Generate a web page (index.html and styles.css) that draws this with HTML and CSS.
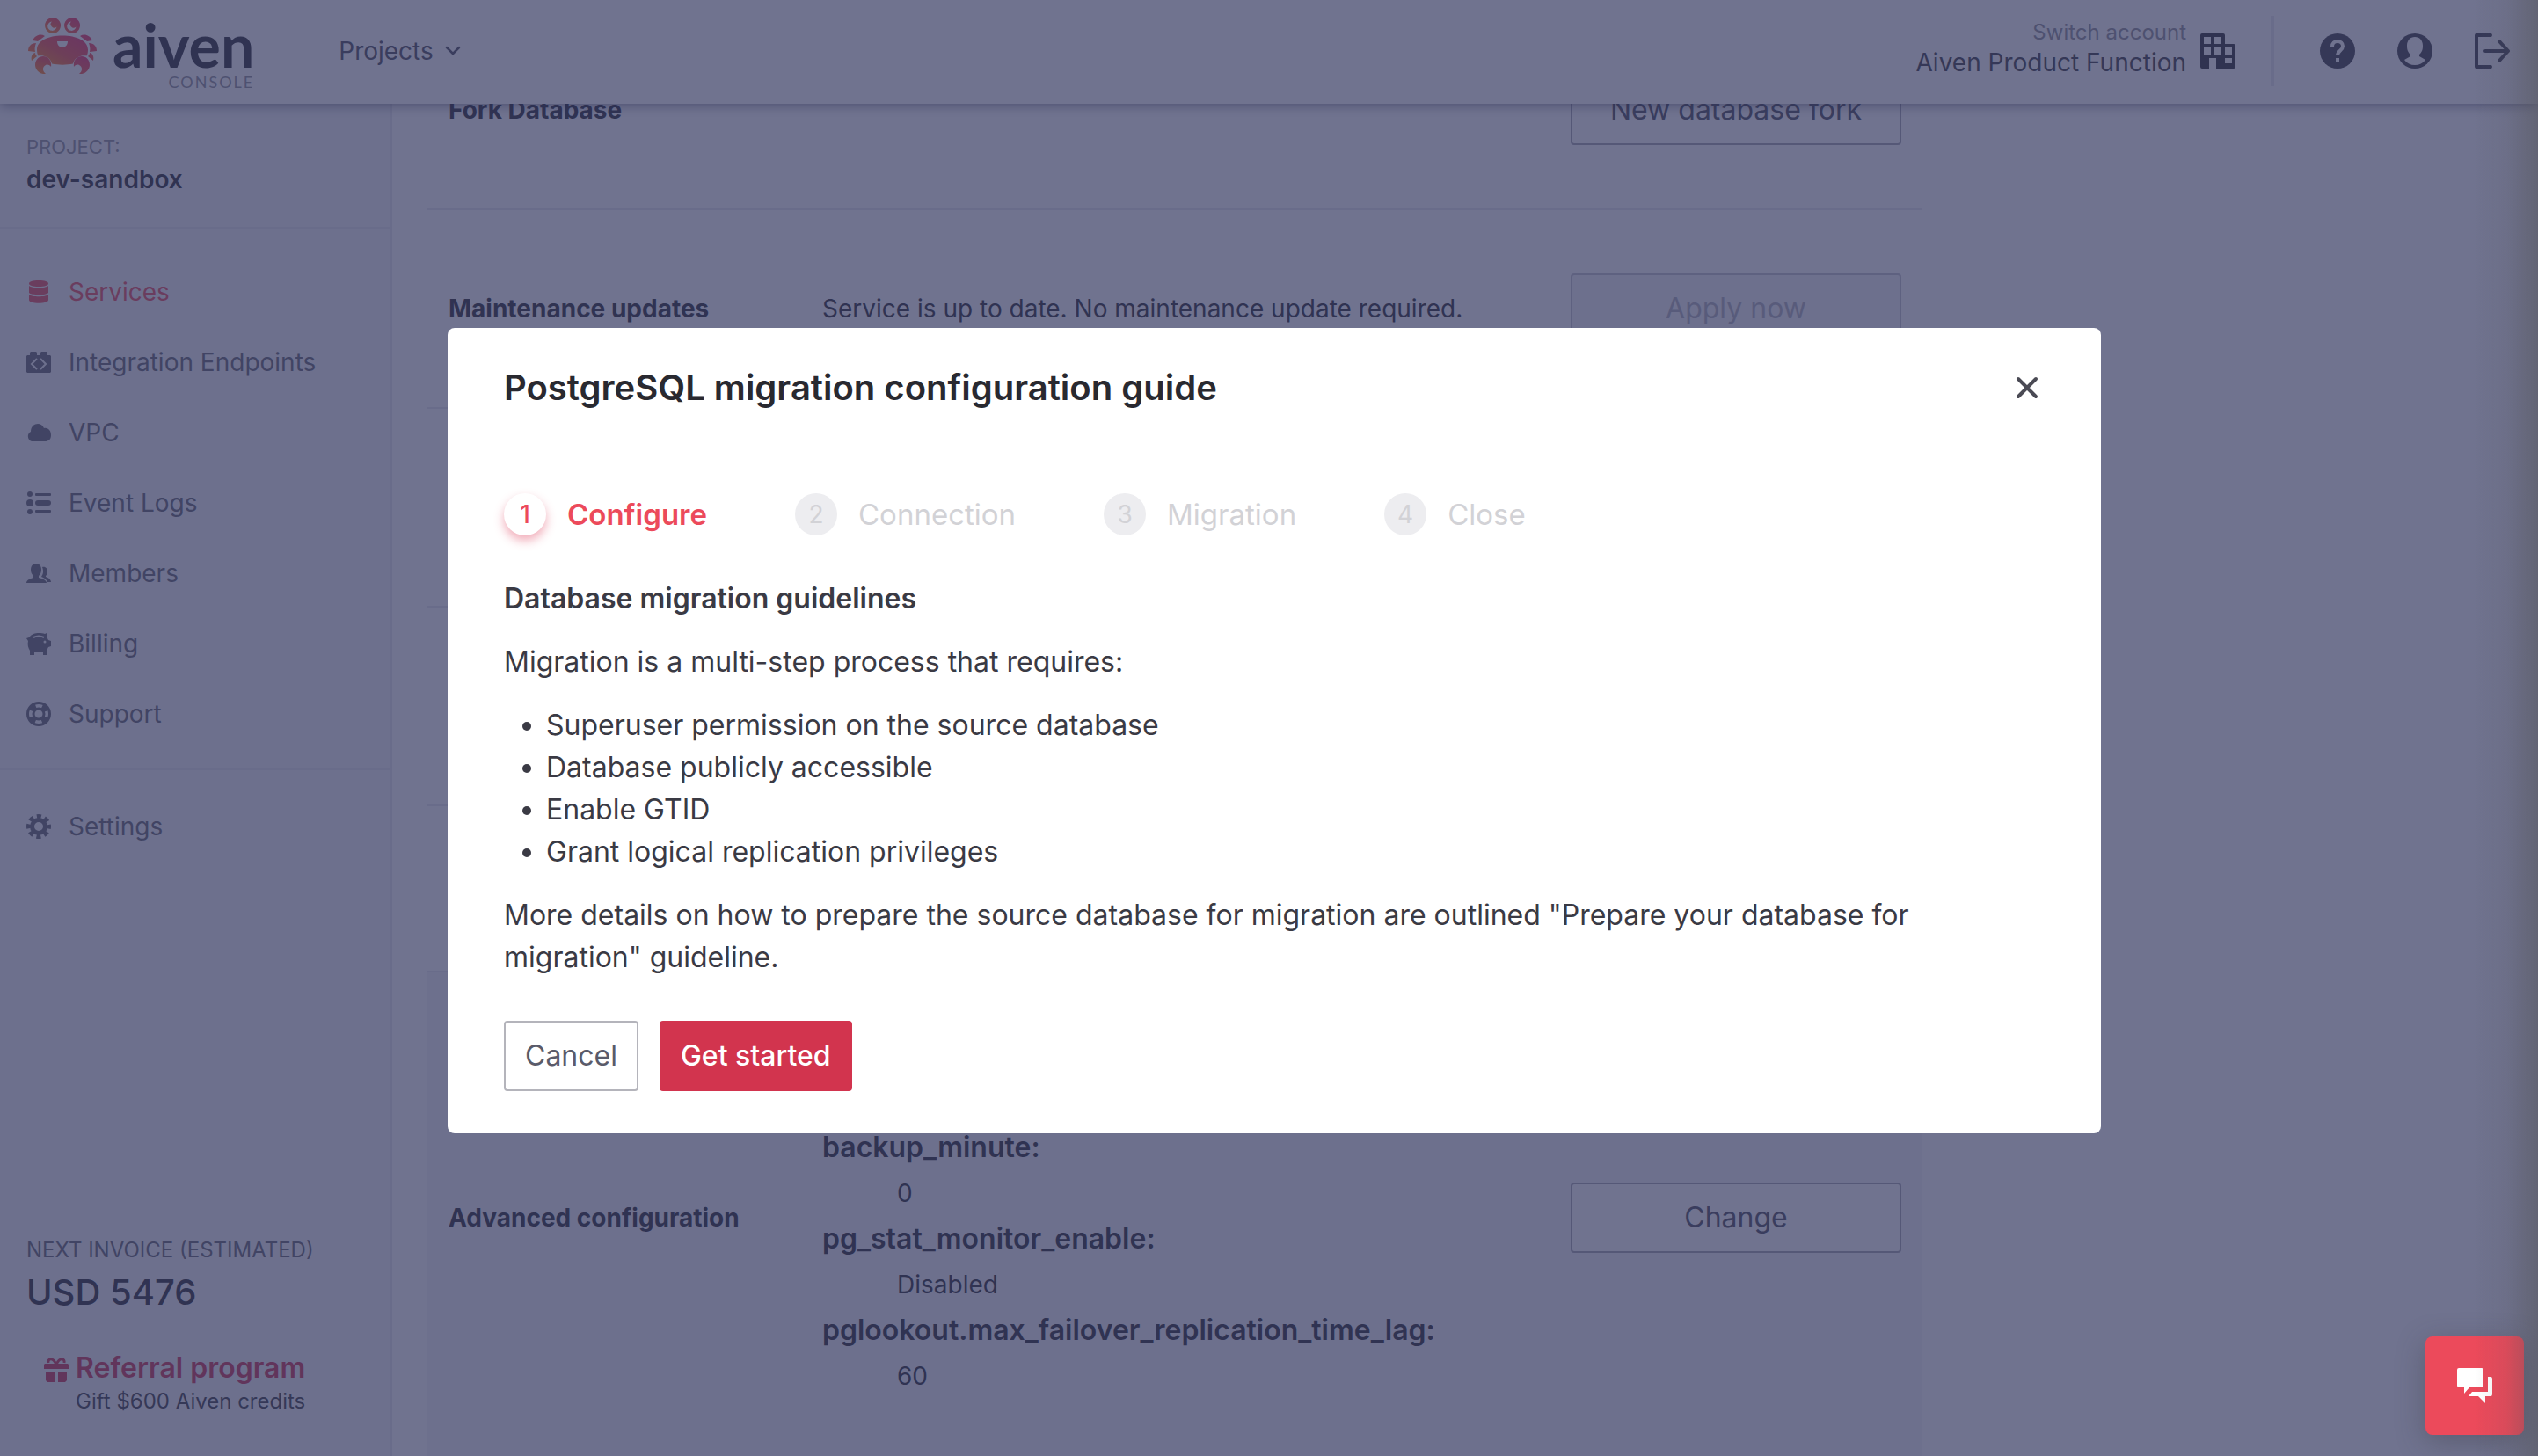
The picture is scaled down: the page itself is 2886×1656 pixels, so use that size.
FILE: index.html
```html
<!DOCTYPE html>
<html lang="en">
<head>
<meta charset="utf-8">
<title>Aiven Console</title>
<link rel="stylesheet" href="styles.css">
</head>
<body>
<div class="app">
  <header class="topbar">
    <a class="logo" href="#" aria-label="Aiven console">
      <svg class="crab" viewBox="0 0 78 64" aria-hidden="true">
        <defs>
          <linearGradient id="crab-fill" x1="0" y1="1" x2="1" y2="0">
            <stop offset="0" stop-color="#ff8b1f"/>
            <stop offset="0.45" stop-color="#f5504a"/>
            <stop offset="1" stop-color="#ec2f6c"/>
          </linearGradient>
        </defs>
        <g fill="url(#crab-fill)">
          <path fill-rule="evenodd" d="M28 0a9 9 0 1 0 .1 0zM27 4.500a5.200 5.200 0 1 0 5.500 6a4 4 0 0 1-5.500-6zM50 0a9 9 0 1 0 .1 0zM49 4.500a5.200 5.200 0 1 0 5.500 6a4 4 0 0 1-5.500-6z"/>
          <path fill-rule="evenodd" d="M39 20.500c16 0 29 6 29 16 0 3-.5 5-1.500 7-5-1-14 1-15.500 9-7 1.500-17 1.500-24 0-1.500-8-10.500-10-15.500-9-1-2-1.500-4-1.500-7 0-10 13-16 29-16zM33 27c0 4 2.500 7 6 7s6-3 6-7z"/>
          <path d="M5 26c3-6 9-8 14-5l-8 6zM73 26c-3-6-9-8-14-5l8 6zM0 38c0-5 3-9 9-9-1 3-2 6-1 10zM78 38c0-5-3-9-9-9 1 3 2 6 1 10zM4 49c-1-4 0-8 4-9 0 2 1 3 2 4zM74 49c1-4 0-8-4-9 0 2-1 3-2 4z"/>
          <path d="M20 64c-7 1-12-5-12-10 0-6 4-10 9-10 6 0 10 5 9 12-1-2-4-3-6-2-3 1-5 6 0 10zM58 64c7 1 12-5 12-10 0-6-4-10-9-10-6 0-10 5-9 12 1-2 4-3 6-2 3 1 5 6 0 10z"/>
        </g>
      </svg>
      <span class="wordmark">
        <span class="wordmark-name">aiven</span>
        <span class="wordmark-sub">CONSOLE</span>
      </span>
    </a>
    <button class="projects" type="button">Projects
      <svg class="chevron" viewBox="0 0 20 20" aria-hidden="true"><path d="M3 6l7 7 7-7" fill="none" stroke="currentColor" stroke-width="2.500" stroke-linecap="round" stroke-linejoin="round"/></svg>
    </button>
    <div class="account">
      <button class="switch" type="button">
        <span class="switch-text">
          <span class="switch-hint">Switch account</span>
          <span class="switch-name">Aiven Product Function</span>
        </span>
        <svg class="icon-lg dark" viewBox="0 0 40 40" aria-hidden="true"><path fill-rule="evenodd" fill="currentColor" d="M2 0h24a2 2 0 0 1 2 2v10h10a2 2 0 0 1 2 2v24a2 2 0 0 1-2 2H18V28h-8v12H2a2 2 0 0 1-2-2V2a2 2 0 0 1 2-2zM4 4v8h8V4zM16 4v8h8V4zM4 16v8h8v-8zM16 16v8h8v-8zM28 16v8h8v-8zM28 28v6h8v-6z"/></svg>
      </button>
      <button class="icon-button" type="button" aria-label="Help">
        <svg class="icon-lg" viewBox="0 0 40 40" aria-hidden="true"><circle cx="20" cy="20" r="20" fill="currentColor"/><path d="M14 15c0-4 2.500-6 6-6s6 2 6 5.500c0 5-6 5-6 10.500" fill="none" stroke="#fff" stroke-width="4"/><rect x="18" y="28" width="4" height="4" fill="#fff"/></svg>
      </button>
      <button class="icon-button" type="button" aria-label="User profile">
        <svg class="icon-lg" viewBox="0 0 40 40" aria-hidden="true"><circle cx="20" cy="20" r="20" fill="currentColor"/><path fill="#fff" d="M20 4c5.500 0 9 4 9 10 0 5-1 7-4 10v2l7 4c-3 4-7 6-12 6s-9-2-12-6l7-4v-2c-3-3-4-5-4-10 0-6 3.500-10 9-10z"/></svg>
      </button>
      <button class="icon-button" type="button" aria-label="Log out">
        <svg class="icon-lg" viewBox="0 0 40 40" aria-hidden="true"><path d="M18 2H2v36h16M12 20h26M28 9l10 11-10 11" fill="none" stroke="currentColor" stroke-width="4" stroke-linecap="round" stroke-linejoin="round"/></svg>
      </button>
    </div>
  </header>

  <div class="body">
    <aside class="sidebar">
      <div class="project">
        <div class="project-label">PROJECT:</div>
        <div class="project-name">dev-sandbox</div>
      </div>
      <nav class="menu">
        <a class="menu-item active" href="#"><svg class="icon" viewBox="0 0 28 28" aria-hidden="true"><path fill="currentColor" d="M14 1c7 0 11 1.500 11 3.500S21 8 14 8 3 6.500 3 4.500 7 1 14 1zM3 7c3 3 19 3 22 0v8c-2 3-20 3-22 0zM3 17c3 3 19 3 22 0v6c0 5-22 5-22 0z"/></svg>Services</a>
        <a class="menu-item" href="#"><svg class="icon" viewBox="0 0 28 28" aria-hidden="true"><path fill="currentColor" d="M1 6h3V3l1-1h6l1 1v3h4V3l1-1h6l1 1v3h3l1 1v18l-1 1H1l-1-1V7z"/><path d="M12 10l-6 6 6 6M16 10l6 6-6 6" fill="none" stroke="#f4f5f8" stroke-width="2"/></svg>Integration Endpoints</a>
        <a class="menu-item" href="#"><svg class="icon" viewBox="0 0 28 28" aria-hidden="true"><path fill="currentColor" d="M6 24a6 6 0 0 1-1-11c0-10 12-12 15-4 5-1 8 3 8 8s-3 7-7 7z"/></svg>VPC</a>
        <a class="menu-item" href="#"><svg class="icon" viewBox="0 0 28 28" aria-hidden="true"><g fill="currentColor"><circle cx="4" cy="4" r="3"/><circle cx="4" cy="14" r="4"/><circle cx="4" cy="24" r="3"/><rect x="10" y="3" width="18" height="3" rx="1"/><rect x="10" y="11" width="18" height="6" rx="3"/><rect x="10" y="22" width="18" height="3" rx="1"/></g></svg>Event Logs</a>
        <a class="menu-item" href="#"><svg class="icon" viewBox="0 0 28 28" aria-hidden="true"><g fill="currentColor"><path d="M11 3c4 0 6 3 6 7 0 3-1 5-3 7v2c4 1 9 3 9 6H0c0-3 4-5 8-6v-2c-2-2-3-4-3-7 0-4 2-7 6-7z"/><path d="M18 7c4-1 6 2 6 5s-1 4-2 5v1c3 1 6 3 6 6h-4c-1-3-4-5-7-6 2-3 3-6 1-11z"/></g></svg>Members</a>
        <a class="menu-item" href="#"><svg class="icon" viewBox="0 0 28 28" aria-hidden="true"><path fill="currentColor" d="M0 8l3-1C6 3 10 2 14 2c3 0 5 0 7 1l2-1v4l2 4 3 1v6l-3 1-2 4v5h-4v-3H9v3H4v-5c-2-3-3-7-2-11z"/><path d="M8 7c4-2 8-2 12 0" fill="none" stroke="#f4f5f8" stroke-width="2"/><circle cx="21" cy="12" r="1.500" fill="#f4f5f8"/></svg>Billing</a>
        <a class="menu-item" href="#"><svg class="icon" viewBox="0 0 28 28" aria-hidden="true"><g fill="none" stroke="currentColor"><circle cx="14" cy="14" r="12.500" stroke-width="3"/><circle cx="14" cy="14" r="6" stroke-width="3"/><circle cx="14" cy="14" r="9" stroke-width="7" stroke-dasharray="7 7.137" stroke-dashoffset="-3.600"/></g></svg>Support</a>
      </nav>
      <nav class="menu menu-last">
        <a class="menu-item" href="#"><svg class="icon" viewBox="0 0 28 28" aria-hidden="true"><g fill="none" stroke="currentColor"><circle cx="14" cy="14" r="7.500" stroke-width="5"/><circle cx="14" cy="14" r="11.500" stroke-width="5" stroke-dasharray="5 4.032" stroke-dashoffset="2.500"/></g></svg>Settings</a>
      </nav>
      <div class="invoice">
        <div class="invoice-label">NEXT INVOICE (ESTIMATED)</div>
        <div class="invoice-sum">USD 5476</div>
      </div>
      <a class="referral" href="#">
        <svg class="icon gift" viewBox="0 0 28 28" aria-hidden="true"><g fill="currentColor"><path d="M1 7h26l1 1v5H0V8zM2 16h10v12H4l-2-2zM16 16h10v10l-2 2h-8z"/></g><path d="M14 8C10-1 4 1 5 6M14 8c4-9 10-7 9-2" fill="none" stroke="currentColor" stroke-width="3"/></svg>
        <span class="referral-text">
          <span class="referral-title">Referral program</span>
          <span class="referral-note">Gift $600 Aiven credits</span>
        </span>
      </a>
    </aside>

    <main class="content">
      <section class="row">
        <h3 class="row-label">Fork Database</h3>
        <p class="row-text"></p>
        <button class="btn btn-row" type="button">New database fork</button>
      </section>
      <section class="row">
        <h3 class="row-label">Maintenance updates</h3>
        <p class="row-text">Service is up to date. No maintenance update required.</p>
        <button class="btn btn-row" type="button" disabled>Apply now</button>
      </section>
      <section class="row"></section>
      <section class="row"></section>
      <section class="row row-short"></section>
      <section class="row row-advanced">
        <h3 class="row-label">Advanced configuration</h3>
        <dl class="settings">
          <dt>backup_minute:</dt><dd>0</dd>
          <dt>pg_stat_monitor_enable:</dt><dd>Disabled</dd>
          <dt>pglookout.max_failover_replication_time_lag:</dt><dd>60</dd>
        </dl>
        <button class="btn btn-row" type="button">Change</button>
      </section>
    </main>
  </div>
</div>

<div class="overlay">
  <div class="modal" role="dialog" aria-modal="true" aria-labelledby="guide-title">
    <div class="modal-head">
      <h1 class="modal-title" id="guide-title">PostgreSQL migration configuration guide</h1>
      <button class="close" type="button" aria-label="Close dialog">
        <svg class="icon-lg" viewBox="0 0 40 40" aria-hidden="true"><path d="M10 10l20 20M30 10L10 30" stroke="currentColor" stroke-width="4" stroke-linecap="round"/></svg>
      </button>
    </div>
    <ol class="steps">
      <li class="step current"><span class="step-num">1</span>Configure</li>
      <li class="step"><span class="step-num">2</span>Connection</li>
      <li class="step"><span class="step-num">3</span>Migration</li>
      <li class="step"><span class="step-num">4</span>Close</li>
    </ol>
    <div class="guide">
      <h2 class="guide-title">Database migration guidelines</h2>
      <p>Migration is a multi-step process that requires:</p>
      <ul>
        <li>Superuser permission on the source database</li>
        <li>Database publicly accessible</li>
        <li>Enable GTID</li>
        <li>Grant logical replication privileges</li>
      </ul>
      <p>More details on how to prepare the source database for migration are outlined "Prepare your database for migration" guideline.</p>
    </div>
    <div class="actions">
      <button class="btn btn-cancel" type="button">Cancel</button>
      <button class="btn btn-primary" type="button">Get started</button>
    </div>
  </div>
</div>

<button class="chat" type="button" aria-label="Open chat">
  <svg class="icon-lg" viewBox="0 0 40 40" aria-hidden="true"><path fill="currentColor" d="M2 0h26a2 2 0 0 1 2 2v18a2 2 0 0 1-2 2H14l-6 7v-7H2a2 2 0 0 1-2-2V2a2 2 0 0 1 2-2zM35 10h3a2 2 0 0 1 2 2v18a2 2 0 0 1-2 2h-6v8l-8-8H13l4-5h18z"/></svg>
</button>
<div class="edge"></div>
</body>
</html>
```
FILE: styles.css
```css
* { box-sizing: border-box; }

body {
  margin: 0;
  font-family: Inter, "Liberation Sans", sans-serif;
  font-size: 28px;
  line-height: 40px;
  color: #292934;
  background: #fff;
  overflow: hidden;
}

h1, h2, h3, p, ul, ol, dl, dd { margin: 0; padding: 0; }
a { color: inherit; text-decoration: none; }
svg { display: block; flex: none; }

button {
  margin: 0;
  padding: 0;
  border: 0;
  background: none;
  font: inherit;
  color: inherit;
}

.icon { width: 28px; height: 28px; }
.icon-lg { width: 40px; height: 40px; }

.app {
  display: flex;
  flex-direction: column;
  height: 100vh;
}

/* Top bar */
.topbar {
  display: flex;
  align-items: center;
  flex: none;
  height: 118px;
  padding: 0 32px 2px;
  background: #fff;
  box-shadow: 0 2px 12px rgba(20, 20, 50, 0.5);
  z-index: 1;
}

.logo {
  display: flex;
  align-items: center;
  gap: 18px;
}
.crab { width: 78px; height: 64px; margin-bottom: 12px; }
.wordmark {
  display: flex;
  flex-direction: column;
  align-items: flex-end;
  font-family: Lato, sans-serif;
}
.wordmark-name {
  font-size: 68px;
  font-weight: 700;
  line-height: 70px;
}
.wordmark-sub {
  font-size: 18px;
  line-height: 14px;
  letter-spacing: 2px;
  color: #8c8c98;
}

.projects {
  display: flex;
  align-items: center;
  gap: 12px;
  margin-left: 96px;
  color: #4a4b5b;
}
.chevron { width: 20px; height: 20px; }

.account {
  display: flex;
  align-items: center;
  gap: 48px;
  margin-left: auto;
  color: #3a3a44;
}
.switch {
  display: flex;
  align-items: center;
  gap: 16px;
  height: 80px;
  margin-right: 4px;
  padding-right: 40px;
  border-right: 4px solid #e8e8ee;
}
.switch-text {
  display: flex;
  flex-direction: column;
  padding-bottom: 6px;
  text-align: right;
}
.switch-hint { font-size: 24px; line-height: 32px; color: #8c8c98; }
.switch-name { line-height: 36px; }
.dark { color: #292930; }

/* Sidebar */
.body { display: flex; flex: 1; min-height: 0; }

.sidebar {
  display: flex;
  flex-direction: column;
  flex: none;
  width: 446px;
  padding-bottom: 46px;
  background: #f4f5f8;
  border-right: 2px solid #e8e8ee;
  color: #62636f;
}
.project {
  padding: 32px 30px 34px;
  border-bottom: 2px solid #e8e8ee;
}
.project-label { font-size: 22px; line-height: 34px; color: #8c8c98; }
.project-name { font-weight: 600; color: #292934; }

.menu {
  padding: 32px 0 22px;
  border-bottom: 2px solid #e8e8ee;
}
.menu-last { padding: 24px 0; border-bottom: 0; }
.menu-item {
  display: flex;
  align-items: center;
  gap: 20px;
  height: 80px;
  padding: 0 30px;
}
.active { color: #ec4a5b; }

.invoice { margin-top: auto; padding: 0 30px; }
.invoice-label { font-size: 24px; line-height: 40px; }
.invoice-sum {
  font-size: 40px;
  line-height: 56px;
  font-weight: 500;
  color: #292934;
}

.referral {
  display: flex;
  gap: 8px;
  margin: 24px 28px 0;
  padding: 12px 22px 0;
}
.gift { margin-top: 10px; color: #ce2f52; }
.referral-text { display: flex; flex-direction: column; }
.referral-title { font-size: 32px; line-height: 44px; font-weight: 600; color: #ce2f52; }
.referral-note { font-size: 24px; line-height: 32px; color: #3a3a44; }

/* Service settings */
.content {
  display: flex;
  flex-direction: column;
  justify-content: flex-end;
  width: 1740px;
  padding-left: 40px;
  margin-bottom: -8px;
}
.row {
  display: grid;
  grid-template-columns: 401px 1fr 376px;
  column-gap: 24px;
  align-items: center;
  flex: none;
  height: 226px;
  padding: 0 24px;
  border-bottom: 2px solid #e8e8ee;
}
.row-short { height: 189px; }
.row-advanced {
  height: 558px;
  background: #f4f5f8;
  border-bottom: 0;
}
.row-label { font-size: 28px; font-weight: 700; }

.settings { align-self: end; padding-bottom: 73px; }
.settings dt { font-size: 32px; line-height: 52px; font-weight: 600; }
.settings dd { line-height: 52px; padding-left: 85px; }

.btn {
  height: 80px;
  padding: 0 22px;
  border: 2px solid #b4b4bb;
  border-radius: 4px;
  background: #fff;
  font-size: 32px;
  color: #5a5b6a;
}
.btn-row { color: #4a4b5b; border-color: #a4a4b0; }
.btn:disabled { background: #f4f5f8; border-color: #c4c4cc; color: #b0b0bc; }

/* Dialog */
.overlay {
  position: fixed;
  inset: 0;
  display: flex;
  align-items: center;
  justify-content: center;
  padding: 6px 0 0 12px;
  background: rgba(51, 56, 95, 0.7);
  z-index: 2;
}
.modal {
  width: 1880px;
  max-width: 100%;
  padding: 40px 64px 48px;
  border-radius: 8px;
  background: #fff;
  font-size: 32px;
  line-height: 48px;
  color: #3a3a44;
}
.modal-head {
  display: flex;
  align-items: center;
  justify-content: space-between;
}
.modal-title {
  font-size: 40px;
  line-height: 56px;
  font-weight: 600;
  color: #292930;
}
.close { color: #4a4a54; }

.steps {
  display: flex;
  gap: 100px;
  margin: 92px 0 48px;
  list-style: none;
  font-size: 33px;
}
.step {
  display: flex;
  align-items: center;
  gap: 24px;
  color: #d2d2d6;
}
.step-num {
  width: 48px;
  height: 48px;
  border-radius: 50%;
  background: #ededf0;
  font-size: 28px;
  text-align: center;
}
.current { font-weight: 600; color: #ec4a5b; }
.current .step-num {
  background: #fff;
  font-weight: 500;
  box-shadow: 0 6px 12px rgba(220, 50, 80, 0.4);
}

.guide {
  display: flex;
  flex-direction: column;
  gap: 24px;
}
.guide-title { font-size: 32px; font-weight: 600; }
.guide ul { padding-left: 48px; }

.actions { display: flex; gap: 24px; margin-top: 48px; }
.btn-primary {
  border-color: #d2344e;
  background: #d2344e;
  color: #fff;
  font-weight: 500;
}

.chat {
  position: fixed;
  right: 16px;
  bottom: 24px;
  display: flex;
  align-items: center;
  justify-content: center;
  width: 112px;
  height: 112px;
  border-radius: 8px;
  background: #ec4a5b;
  color: #fff;
  box-shadow: 0 8px 32px rgba(60, 60, 70, 0.4);
  z-index: 3;
}

/* Soft shade along the window's right edge */
.edge {
  position: fixed;
  inset: 0 0 0 auto;
  width: 72px;
  background: linear-gradient(to right, rgba(85, 85, 90, 0), rgba(85, 85, 90, 0.12) 50%, rgba(85, 85, 90, 0.5));
  pointer-events: none;
  z-index: 4;
}
```
